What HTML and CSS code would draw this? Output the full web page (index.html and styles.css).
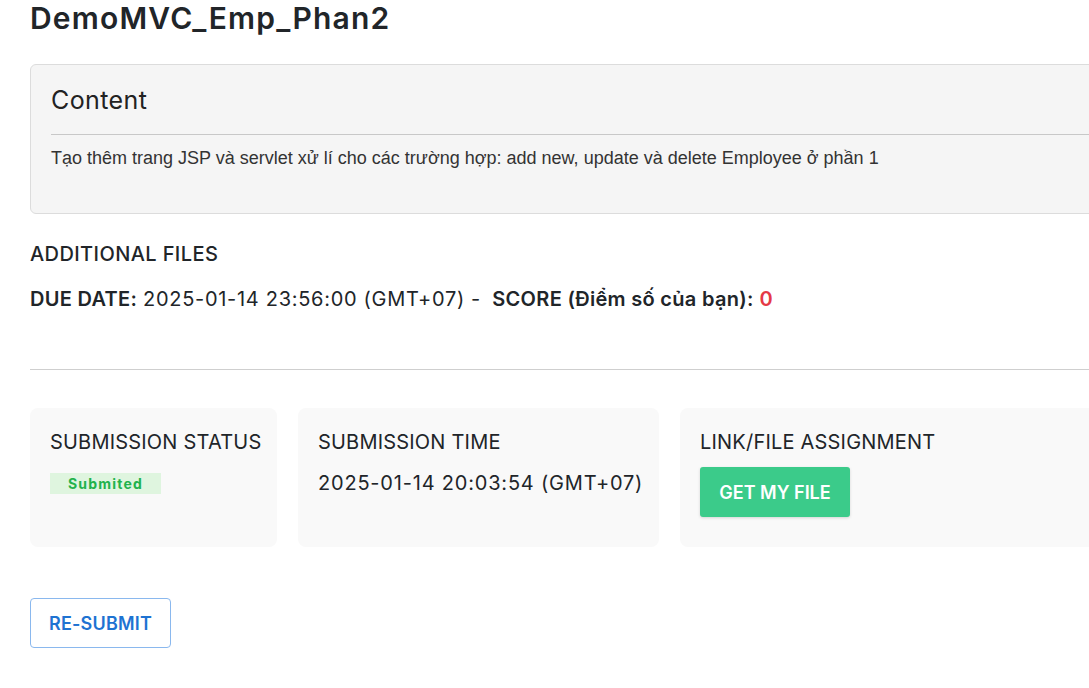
FILE: index.html
```html
<!DOCTYPE html>
<html lang="vi">
<head>
<meta charset="utf-8">
<title>DemoMVC_Emp_Phan2</title>
<link rel="stylesheet" href="styles.css">
</head>
<body>
<main class="page">
  <h1 class="title">DemoMVC_Emp_Phan2</h1>

  <section class="content-box">
    <h2 class="content-title">Content</h2>
    <hr class="content-rule">
    <p class="content-text">Tạo thêm trang JSP và servlet xử lí cho các trường hợp: add new, update và delete Employee ở phần 1</p>
  </section>

  <h3 class="section-label">ADDITIONAL FILES</h3>
  <p class="due-line"><b>DUE DATE:</b> <span class="num">2025-01-14 23:56:00 (GMT+07)</span> - &nbsp;<b>SCORE (Điểm số của bạn):</b> <span class="score">0</span></p>

  <hr class="divider">

  <div class="cards">
    <div class="card card-status">
      <div class="card-title">SUBMISSION STATUS</div>
      <span class="badge">Submited</span>
    </div>
    <div class="card card-time">
      <div class="card-title">SUBMISSION TIME</div>
      <div class="card-value">2025-01-14 20:03:54 (GMT+07)</div>
    </div>
    <div class="card card-link">
      <div class="card-title">LINK/FILE ASSIGNMENT</div>
      <button class="btn-get">GET MY FILE</button>
    </div>
  </div>

  <button class="btn-resubmit">RE-SUBMIT</button>
</main>
</body>
</html>
```

FILE: styles.css
```css
html, body {
  margin: 0;
  padding: 0;
  overflow: hidden;
  background: #fff;
}
body {
  font-family: Inter, "Noto Sans", sans-serif;
  color: #212529;
}
.page {
  width: 1160px;
  padding: 0 0 0 30px;
}
.title {
  margin: 0;
  font-size: 30px;
  font-weight: 600;
  line-height: 36px;
  letter-spacing: 1.2px;
  color: #212529;
}
.content-box {
  margin-top: 28px;
  background: #f5f5f5;
  border: 1px solid #dcdcdc;
  border-radius: 6px;
  padding: 20px 0 0 20px;
  height: 128px;
  box-sizing: content-box;
}
.content-title {
  margin: 0;
  font-size: 25px;
  font-weight: 400;
  line-height: 30px;
  letter-spacing: 0.4px;
  color: #222;
}
.content-rule {
  margin: 19px 0 0 0;
  border: 0;
  border-top: 1px solid #c8c8c8;
}
.content-text {
  margin: 12px 0 0 0;
  font-family: "Liberation Sans", Arial, sans-serif;
  font-size: 18px;
  line-height: 22px;
  color: #333;
}
.section-label {
  margin: 28px 0 0 0;
  font-size: 20px;
  font-weight: 500;
  line-height: 24px;
  letter-spacing: 0.4px;
}
.due-line {
  margin: 21px 0 0 0;
  font-size: 20px;
  line-height: 24px;
  letter-spacing: 0.3px;
}
.due-line b {
  font-weight: 600;
}
.due-line .num {
  letter-spacing: 0.7px;
}
.score {
  color: #e53946;
  font-weight: 600;
}
.divider {
  margin: 58px 0 0 0;
  border: 0;
  border-top: 1px solid #cfcfcf;
}
.cards {
  display: flex;
  gap: 21px;
  margin-top: 38px;
}
.card {
  background: #f9f9f9;
  border-radius: 8px;
  height: 139px;
  padding: 22px 0 0 20px;
  box-sizing: border-box;
}
.card-status { width: 247px; }
.card-time { width: 361px; }
.card-link { flex: 1; }
.card-title {
  font-size: 20px;
  line-height: 24px;
  letter-spacing: 0.2px;
  white-space: nowrap;
  color: #212529;
}
.badge {
  display: inline-block;
  margin-top: 19px;
  width: 111px;
  height: 21px;
  line-height: 21px;
  text-align: center;
  background: #dff5df;
  color: #22b24c;
  font-size: 14px;
  font-weight: 700;
  letter-spacing: 1.2px;
}
.card-value {
  margin-top: 17px;
  font-size: 20px;
  line-height: 24px;
  letter-spacing: 0.8px;
  white-space: nowrap;
}
.btn-get {
  display: block;
  margin-top: 13px;
  width: 150px;
  height: 50px;
  border: 0;
  border-radius: 3px;
  background: #3bcb8a;
  color: #fff;
  font-family: Inter, sans-serif;
  font-size: 18px;
  font-weight: 600;
  letter-spacing: 0;
  box-shadow: 0 1px 3px rgba(0,0,0,0.15);
}
.btn-resubmit {
  display: block;
  margin-top: 51px;
  width: 141px;
  height: 50px;
  border: 1px solid #8ab8ee;
  border-radius: 4px;
  background: #fff;
  color: #1e73d2;
  font-family: Inter, sans-serif;
  font-size: 18px;
  font-weight: 600;
  letter-spacing: 0.2px;
}
```
